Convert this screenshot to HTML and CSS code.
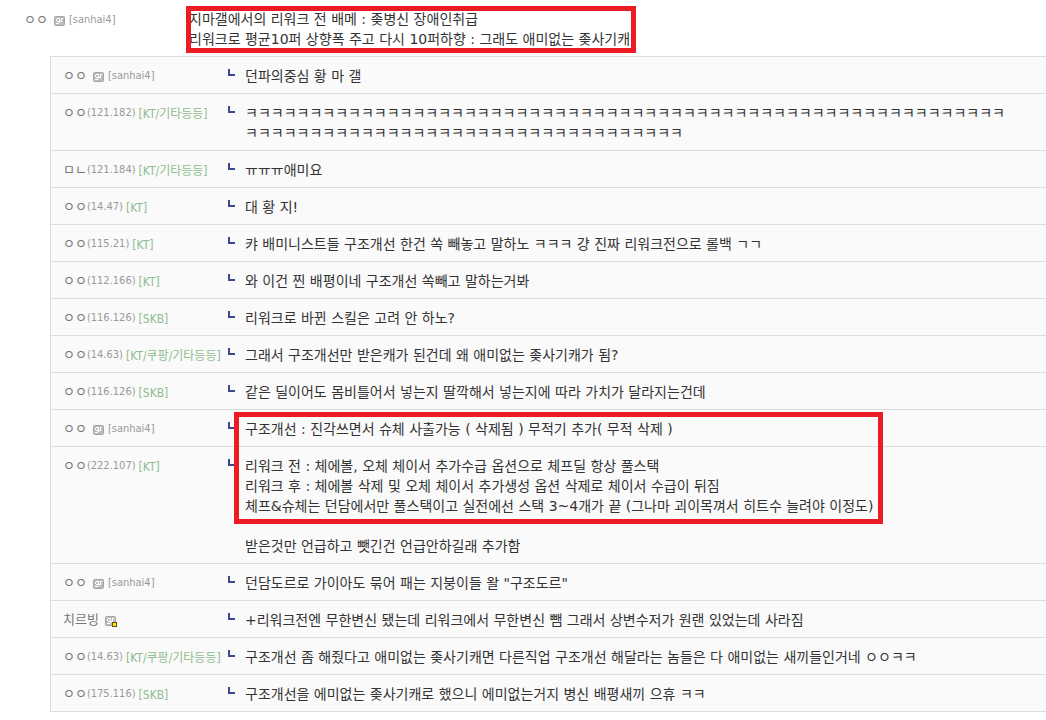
FILE: index.html
```
<!DOCTYPE html>
<html lang="ko">
<head>
    <meta charset="UTF-8">
    <meta name="viewport" content="width=device-width, initial-scale=1.0">
    <title>댓글</title>
    <link rel="stylesheet" href="styles.css">
</head>
<body>

    <svg class="defs" width="0" height="0" aria-hidden="true">
        <symbol id="gallog" viewBox="0 0 11 10">
            <rect x="0.5" y="0.5" width="10" height="9" rx="1" fill="#bcbcbc" stroke="#a6a6a6"/>
            <path d="M3 2H6V3H3ZM2 3H3V5H2ZM3 5H6V6H3ZM5 3H6V7H5ZM2 7H5V8H2ZM7 2H9V3H7ZM7 3H8V5H7ZM6 5H8V6H6Z" fill="#fff"/>
        </symbol>
        <symbol id="reply" viewBox="0 0 7 7">
            <path d="M0 0H2V5H7V7H0Z" fill="#3b4890"/>
        </symbol>
    </svg>

    <div class="comment">
        <div class="writer"><span class="nick">ㅇㅇ</span><svg class="icon"><use href="#gallog"/></svg><span class="ip">[sanhai4]</span></div>
        <p class="text marked">지마갤에서의 리워크 전 배메 : 좆병신 장애인취급<br>리워크로 평균10퍼 상향폭 주고 다시 10퍼하향 : 그래도 애미없는 좆사기캐</p>
    </div>

    <ul class="reply-list">
        <li class="reply">
            <div class="writer"><span class="nick">ㅇㅇ</span><svg class="icon"><use href="#gallog"/></svg><span class="ip">[sanhai4]</span></div>
            <svg class="arrow"><use href="#reply"/></svg>
            <p class="text">던파의중심 황 마 갤</p>
        </li>
        <li class="reply">
            <div class="writer"><span class="nick">ㅇㅇ</span><span class="ip">(121.182)</span><span class="isp">[KT/기타등등]</span></div>
            <svg class="arrow"><use href="#reply"/></svg>
            <p class="text">ㅋㅋㅋㅋㅋㅋㅋㅋㅋㅋㅋㅋㅋㅋㅋㅋㅋㅋㅋㅋㅋㅋㅋㅋㅋㅋㅋㅋㅋㅋㅋㅋㅋㅋㅋㅋㅋㅋㅋㅋㅋㅋㅋㅋㅋㅋㅋㅋㅋㅋㅋㅋㅋㅋㅋㅋㅋㅋㅋ<br>ㅋㅋㅋㅋㅋㅋㅋㅋㅋㅋㅋㅋㅋㅋㅋㅋㅋㅋㅋㅋㅋㅋㅋㅋㅋㅋㅋㅋㅋㅋㅋㅋㅋㅋ</p>
        </li>
        <li class="reply">
            <div class="writer"><span class="nick">ㅁㄴ</span><span class="ip">(121.184)</span><span class="isp">[KT/기타등등]</span></div>
            <svg class="arrow"><use href="#reply"/></svg>
            <p class="text">ㅠㅠㅠ애미요</p>
        </li>
        <li class="reply">
            <div class="writer"><span class="nick">ㅇㅇ</span><span class="ip">(14.47)</span><span class="isp">[KT]</span></div>
            <svg class="arrow"><use href="#reply"/></svg>
            <p class="text">대 황 지!</p>
        </li>
        <li class="reply">
            <div class="writer"><span class="nick">ㅇㅇ</span><span class="ip">(115.21)</span><span class="isp">[KT]</span></div>
            <svg class="arrow"><use href="#reply"/></svg>
            <p class="text">캬 배미니스트들 구조개선 한건 쏙 빼놓고 말하노 ㅋㅋㅋ 걍 진짜 리워크전으로 롤백 ㄱㄱ</p>
        </li>
        <li class="reply">
            <div class="writer"><span class="nick">ㅇㅇ</span><span class="ip">(112.166)</span><span class="isp">[KT]</span></div>
            <svg class="arrow"><use href="#reply"/></svg>
            <p class="text">와 이건 찐 배평이네 구조개선 쏙빼고 말하는거봐</p>
        </li>
        <li class="reply">
            <div class="writer"><span class="nick">ㅇㅇ</span><span class="ip">(116.126)</span><span class="isp">[SKB]</span></div>
            <svg class="arrow"><use href="#reply"/></svg>
            <p class="text">리워크로 바뀐 스킬은 고려 안 하노?</p>
        </li>
        <li class="reply">
            <div class="writer"><span class="nick">ㅇㅇ</span><span class="ip">(14.63)</span><span class="isp">[KT/쿠팡/기타등등]</span></div>
            <svg class="arrow"><use href="#reply"/></svg>
            <p class="text">그래서 구조개선만 받은캐가 된건데 왜 애미없는 좆사기캐가 됨?</p>
        </li>
        <li class="reply">
            <div class="writer"><span class="nick">ㅇㅇ</span><span class="ip">(116.126)</span><span class="isp">[SKB]</span></div>
            <svg class="arrow"><use href="#reply"/></svg>
            <p class="text">같은 딜이어도 몸비틀어서 넣는지 딸깍해서 넣는지에 따라 가치가 달라지는건데</p>
        </li>
        <li class="reply marked-rows">
            <div class="writer"><span class="nick">ㅇㅇ</span><svg class="icon"><use href="#gallog"/></svg><span class="ip">[sanhai4]</span></div>
            <svg class="arrow"><use href="#reply"/></svg>
            <p class="text">구조개선 : 진각쓰면서 슈체 사출가능 ( 삭제됨 ) 무적기 추가( 무적 삭제 )</p>
        </li>
        <li class="reply">
            <div class="writer"><span class="nick">ㅇㅇ</span><span class="ip">(222.107)</span><span class="isp">[KT]</span></div>
            <svg class="arrow"><use href="#reply"/></svg>
            <p class="text">리워크 전 : 체에볼, 오체 체이서 추가수급 옵션으로 체프딜 항상 풀스택<br>리워크 후 : 체에볼 삭제 및 오체 체이서 추가생성 옵션 삭제로 체이서 수급이 뒤짐<br>체프&amp;슈체는 던담에서만 풀스택이고 실전에선 스택 3~4개가 끝 (그나마 괴이목껴서 히트수 늘려야 이정도)<br><br>받은것만 언급하고 뺏긴건 언급안하길래 추가함</p>
        </li>
        <li class="reply">
            <div class="writer"><span class="nick">ㅇㅇ</span><svg class="icon"><use href="#gallog"/></svg><span class="ip">[sanhai4]</span></div>
            <svg class="arrow"><use href="#reply"/></svg>
            <p class="text">던담도르로 가이아도 묶어 패는 지붕이들 왈 "구조도르"</p>
        </li>
        <li class="reply">
            <div class="writer"><span class="nick">치르빙</span><svg class="icon fixed" viewBox="0 0 12 11"><use href="#gallog" width="11" height="10"/><rect x="7.5" y="6.5" width="4" height="4" fill="#ffe600" stroke="#5c5210"/></svg></div>
            <svg class="arrow"><use href="#reply"/></svg>
            <p class="text">+리워크전엔 무한변신 됐는데 리워크에서 무한변신 뺌 그래서 상변수저가 원랜 있었는데 사라짐</p>
        </li>
        <li class="reply">
            <div class="writer"><span class="nick">ㅇㅇ</span><span class="ip">(14.63)</span><span class="isp">[KT/쿠팡/기타등등]</span></div>
            <svg class="arrow"><use href="#reply"/></svg>
            <p class="text">구조개선 좀 해줬다고 애미없는 좆사기캐면 다른직업 구조개선 해달라는 놈들은 다 애미없는 새끼들인거네 ㅇㅇㅋㅋ</p>
        </li>
        <li class="reply">
            <div class="writer"><span class="nick">ㅇㅇ</span><span class="ip">(175.116)</span><span class="isp">[SKB]</span></div>
            <svg class="arrow"><use href="#reply"/></svg>
            <p class="text">구조개선을 에미없는 좆사기캐로 했으니 에미없는거지 병신 배평새끼 으휴 ㅋㅋ</p>
        </li>
    </ul>

</body>
</html>
```
FILE: styles.css
```
body {
    margin: 0;
    background-color: #fff;
    color: #333;
    font-family: "DejaVu Sans", "Noto Sans CJK KR", sans-serif;
    font-size: 14px;
    line-height: 20px;
}
.defs {
    position: absolute;
}
.comment {
    display: flex;
    padding: 9px 0 7px 24px;
}
.comment .text {
    flex: none;
}
.writer {
    display: flex;
    align-items: center;
    flex: none;
    width: 165px;
    height: 22px;
    color: #999;
    font-family: "DejaVu Sans Condensed", "DejaVu Sans", "Noto Sans CJK KR", sans-serif;
    white-space: nowrap;
}
.reply .writer {
    height: 20px;
}
.nick {
    color: #777;
    font-size: 13px;
}
.ip {
    font-size: 11px;
}
.isp {
    padding-top: 2px;
    margin-left: 3px;
    color: #8fbc8f;
    font-size: 12px;
}
.icon {
    width: 11px;
    height: 10px;
    margin: 2px 4px 0 6px;
}
.icon.fixed {
    width: 12px;
    height: 11px;
}
.text {
    flex: 1;
    margin: 0;
}
.reply-list {
    margin: 0 0 0 50px;
    padding: 0;
    list-style: none;
    background-color: #fafafa;
    border: 1px solid #ddd;
    border-width: 1px 0 0 1px;
}
.reply {
    display: flex;
    padding: 9px 0 7px 12px;
    border-bottom: 1px solid #ddd;
}
.arrow {
    flex: none;
    width: 7px;
    height: 7px;
    margin: 3px 10px 0 0;
}

/* red highlight frames drawn over the comments */
.marked, .marked-rows {
    position: relative;
}
.marked::after, .marked-rows::after {
    content: "";
    position: absolute;
    box-sizing: border-box;
    border: 5px solid #ed1c24;
}
.marked::after {
    top: -3px;
    right: -6px;
    bottom: -4px;
    left: -3px;
}
.marked-rows::after {
    top: 2px;
    left: 183px;
    width: 649px;
    height: 112px;
}
```
